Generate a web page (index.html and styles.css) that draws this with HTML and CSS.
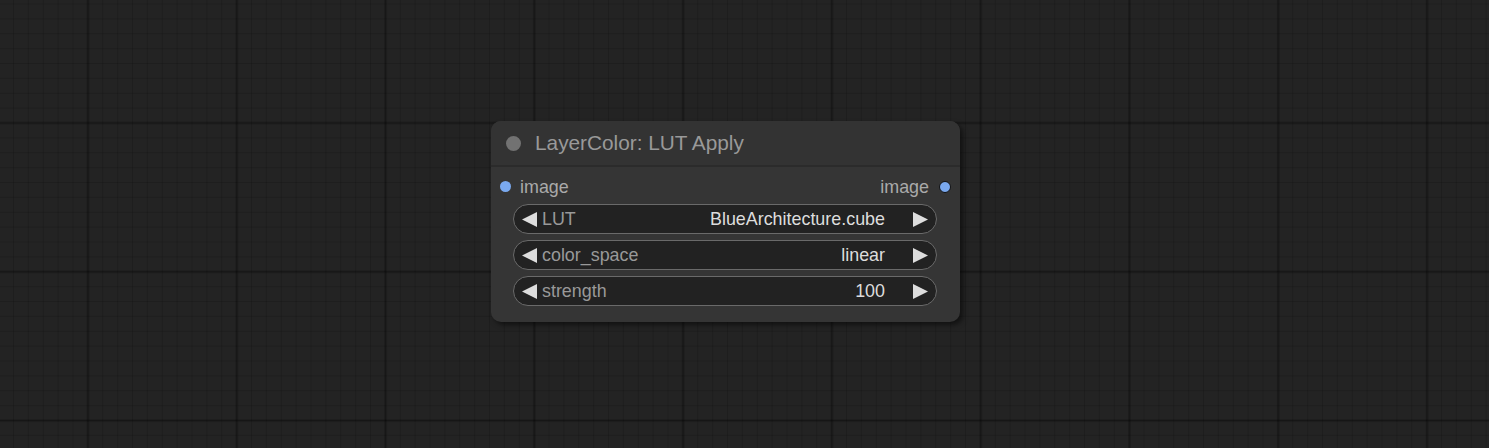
FILE: index.html
```html
<!DOCTYPE html>
<html>
<head>
<meta charset="utf-8">
<link rel="stylesheet" href="styles.css">
</head>
<body>
<div class="canvas">
  <div class="node">
    <div class="node-title">
      <span class="title-dot"></span>
      <span class="title-text">LayerColor: LUT Apply</span>
    </div>
    <div class="node-body">
      <div class="slots">
        <div class="slot slot-in"><span class="slot-dot"></span><span class="slot-label">image</span></div>
        <div class="slot slot-out"><span class="slot-label">image</span><span class="slot-dot slot-dot-out"></span></div>
      </div>
      <div class="widgets">
        <div class="widget">
          <svg class="arrow" width="15" height="15" viewBox="0 0 15 15"><polygon points="15,0 0,7.5 15,15"/></svg>
          <span class="w-label">LUT</span>
          <span class="w-value">BlueArchitecture.cube</span>
          <svg class="arrow arrow-r" width="15" height="15" viewBox="0 0 15 15"><polygon points="0,0 15,7.5 0,15"/></svg>
        </div>
        <div class="widget">
          <svg class="arrow" width="15" height="15" viewBox="0 0 15 15"><polygon points="15,0 0,7.5 15,15"/></svg>
          <span class="w-label">color_space</span>
          <span class="w-value">linear</span>
          <svg class="arrow arrow-r" width="15" height="15" viewBox="0 0 15 15"><polygon points="0,0 15,7.5 0,15"/></svg>
        </div>
        <div class="widget">
          <svg class="arrow" width="15" height="15" viewBox="0 0 15 15"><polygon points="15,0 0,7.5 15,15"/></svg>
          <span class="w-label">strength</span>
          <span class="w-value">100</span>
          <svg class="arrow arrow-r" width="15" height="15" viewBox="0 0 15 15"><polygon points="0,0 15,7.5 0,15"/></svg>
        </div>
      </div>
    </div>
  </div>
</div>
</body>
</html>
```

FILE: styles.css
```css
html, body {
  margin: 0;
  padding: 0;
  width: 100%;
  height: 100%;
  overflow: hidden;
}

body {
  font-family: "Liberation Sans", Arial, sans-serif;
}

.canvas {
  position: relative;
  width: 1489px;
  height: 448px;
  background-color: #232323;
  background-image:
    linear-gradient(to right, rgba(0,0,0,0.08) 0, rgba(0,0,0,0.26) 1px, rgba(0,0,0,0.26) 2px, rgba(0,0,0,0.08) 3px, transparent 3px),
    linear-gradient(to bottom, rgba(0,0,0,0.08) 0, rgba(0,0,0,0.26) 1px, rgba(0,0,0,0.26) 2px, rgba(0,0,0,0.08) 3px, transparent 3px),
    linear-gradient(to right, rgba(0,0,0,0.14) 0, rgba(0,0,0,0.14) 1px, transparent 1px),
    linear-gradient(to bottom, rgba(0,0,0,0.14) 0, rgba(0,0,0,0.14) 1px, transparent 1px);
  background-size:
    148.8px 148.8px,
    148.8px 148.8px,
    14.88px 14.88px,
    14.88px 14.88px;
  background-position:
    86.5px 121.5px,
    86.5px 121.5px,
    13px 3.5px,
    13px 3.5px;
}

.node {
  position: absolute;
  left: 491px;
  top: 121px;
  width: 469px;
  border-radius: 10px;
  background: #353535;
  box-shadow: 3px 3px 5px rgba(0,0,0,0.5);
}

.node-title {
  height: 44px;
  display: flex;
  align-items: center;
  background: #333333;
  border-radius: 10px 10px 0 0;
  border-bottom: 2px solid #2b2b2b;
}

.title-dot {
  width: 15px;
  height: 15px;
  border-radius: 50%;
  background: #727272;
  margin-left: 15px;
  margin-top: 1px;
}

.title-text {
  margin-left: 14px;
  font-size: 20.8px;
  color: #999999;
  line-height: 24px;
}

.node-body {
  padding: 5px 0 16px;
  display: flex;
  flex-direction: column;
}

.slots {
  height: 29px;
  display: flex;
  justify-content: space-between;
  align-items: center;
}

.slot {
  display: flex;
  align-items: center;
}

.slot-in {
  padding-left: 9px;
}

.slot-out {
  padding-right: 9px;
}

.slot-dot {
  width: 11px;
  height: 11px;
  border-radius: 50%;
  background: #7aa9ef;
  box-sizing: border-box;
}

.slot-dot-out {
  border: 1.5px solid #111;
  width: 12px;
  height: 12px;
}

.slot-label {
  font-size: 17.9px;
  color: #aaaaaa;
  line-height: 20px;
  padding-top: 1px;
}

.slot-in .slot-label {
  margin-left: 9px;
}

.slot-out .slot-label {
  margin-right: 10px;
}

.widgets {
  margin-top: 3px;
  display: flex;
  flex-direction: column;
  gap: 6px;
  padding: 0 23px 0 22px;
}

.widget {
  height: 30px;
  box-sizing: border-box;
  border: 1.3px solid #6a6a6a;
  border-radius: 15px;
  background: #222222;
  display: flex;
  align-items: center;
  padding: 0 8px 0 8px;
  font-size: 17.9px;
  line-height: 20px;
}

.arrow {
  flex: none;
  fill: #dddddd;
}

.w-label {
  margin-left: 5px;
  color: #999999;
  flex: 1;
}

.w-value {
  color: #dddddd;
}

.arrow-r {
  margin-left: 28px;
}
```
